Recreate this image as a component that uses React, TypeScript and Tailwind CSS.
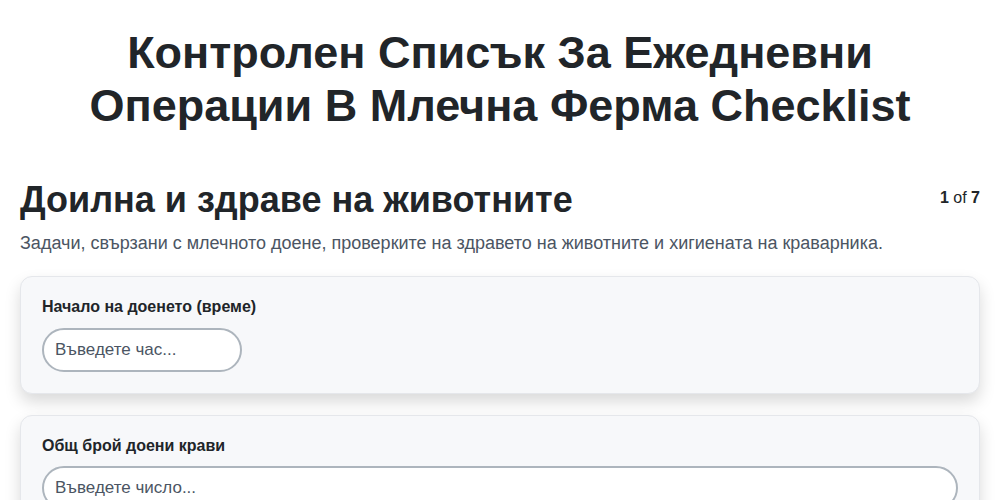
import React from "react";

export default function App() {
  return (
    <div className="min-h-screen bg-white text-[#212529]" style={{ fontFamily: '"Liberation Sans", Arial, sans-serif' }}>
      <div className="px-5 pt-[26px]">
        <h1 className="text-center text-[45px] font-bold leading-[53px] text-[#212529]">
          Контролен Списък За Ежедневни
          <br />
          Операции В Млечна Ферма Checklist
        </h1>
        <div className="mt-[46px] flex items-start justify-between">
          <h2 className="text-[36px] font-bold leading-[44px]">Доилна и здраве на животните</h2>
          <div className="pt-[8px] text-[16px] text-[#212529]">
            <span className="font-bold">1</span> of <span className="font-bold">7</span>
          </div>
        </div>
        <p className="mt-[9px] text-[18px] leading-[24px] text-[#4b5563]">
          Задачи, свързани с млечното доене, проверките на здравето на животните и хигиената на краварника.
        </p>
        <div className="mt-[21px] flex flex-col gap-[21px]">
          <div className="rounded-xl border border-[#e5e7eb] bg-[#f7f8fa] px-[21px] pt-[20px] pb-[21px] shadow-[0_8px_16px_rgba(0,0,0,0.15)]">
            <label className="block text-[16px] font-bold leading-[20px] text-[#212529]">Начало на доенето (време)</label>
            <input
              className="mt-[11px] block h-[44px] w-[200px] rounded-full border-2 border-[#adb5bd] bg-white px-[11px] text-[17px] text-[#212529] placeholder:text-[#4b5563] outline-none"
              placeholder="Въведете час..."
            />
          </div>
          <div className="rounded-xl border border-[#e5e7eb] bg-[#f7f8fa] px-[21px] pt-[20px] pb-[21px] shadow-[0_8px_16px_rgba(0,0,0,0.15)]">
            <label className="block text-[16px] font-bold leading-[20px] text-[#212529]">Общ брой доени крави</label>
            <input
              className="mt-[10px] block h-[44px] w-full rounded-full border-2 border-[#adb5bd] bg-white px-[11px] text-[17px] text-[#212529] placeholder:text-[#4b5563] outline-none"
              placeholder="Въведете число..."
            />
          </div>
        </div>
      </div>
    </div>
  );
}
